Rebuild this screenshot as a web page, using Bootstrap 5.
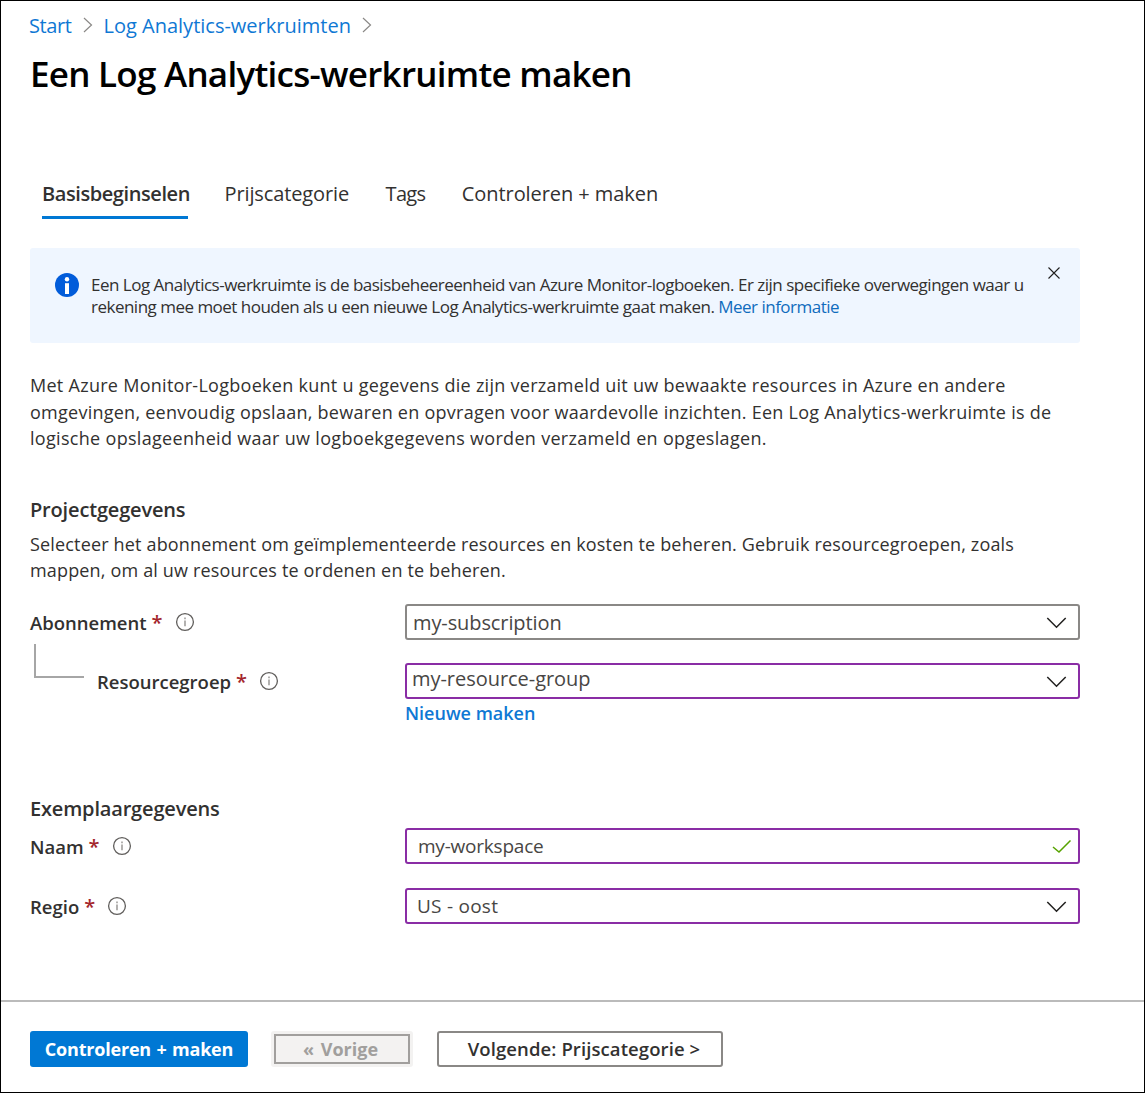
<!DOCTYPE html>
<html lang="nl">
<head>
<meta charset="utf-8">
<meta name="viewport" content="width=device-width, initial-scale=1">
<title>Een Log Analytics-werkruimte maken</title>
<link href="https://cdn.jsdelivr.net/npm/bootstrap@5.3.0/dist/css/bootstrap.min.css" rel="stylesheet">
<style>
body{font-family:"Open Sans","Noto Sans",sans-serif;color:#323130;background:#fff}
svg{flex-shrink:0}
.page-frame{width:1145px;height:1093px;border:1px solid #000;padding-top:11px;overflow:hidden;white-space:nowrap}
.inner{padding-left:29px;width:1079px}
a{color:#0f78d4;text-decoration:none}
.crumbs{font-size:20px;line-height:28px;height:28px;gap:11px;margin-left:-1px}
.c1{letter-spacing:-.4px}
.crumbs svg{margin-top:-2px}
.page-title{font-size:35px;line-height:48px;font-weight:600;letter-spacing:-.74px;color:#000;margin:10px 0 0}
.tabs{margin:82px 0 0 12px;gap:36.5px}
.tabs .nav-link{padding:0 0 8px;font-size:20px;line-height:28px;color:#323130;border-bottom:3px solid transparent}
.tabs .nav-link.active{font-weight:600;border-color:#0078d4}
.tabs .t1{width:146px;letter-spacing:-.42px}
.t2{letter-spacing:-.12px}
.t3{letter-spacing:-.7px}
.t4{letter-spacing:-.07px}
.notice{margin-top:29px;height:95px;background:#eff6ff;border-radius:3px;padding:25px 20px 0 25px;font-size:17px;line-height:22px}
.notice-text{margin:1px 0 0 12px}
.n1{letter-spacing:-.496px}
.n2{letter-spacing:-.51px}
.n2 a{color:#0f6cbd}
.notice .x-ico{margin:-6px 0 0 auto}
.para{font-size:18px;line-height:26.5px;margin:0}
.p1{letter-spacing:.28px;margin-top:29px}
.p1b{letter-spacing:.255px}
.p1c{letter-spacing:.31px}
.p2{letter-spacing:.165px;margin-top:7px}
.sect{font-size:20px;line-height:28px;font-weight:600;letter-spacing:-.17px;margin:0}
.frow{height:36px}
.lbl{width:375px;font-size:18.5px;font-weight:600;line-height:36px;padding-top:2px}
.req{color:#a4262c;margin-left:5px;font-size:20px}
.lbl svg{margin-left:12px;margin-top:-1px}
.box{flex:1;height:36px;border:2px solid #8a8886;border-radius:3px;padding:0 11px 0 6px;font-size:20px;line-height:32px;color:#484644;letter-spacing:-.1px}
.box.edited{border-color:#8a2da5}
.box svg{margin-top:2px}
.v-sub{margin-top:2px}
.v-group{margin:-3px 0 0 -1px;letter-spacing:-.04px}
.v-name{margin-left:5px;font-size:19px;letter-spacing:-.22px}
.v-region{margin-left:4px;font-size:19px;letter-spacing:.25px}
.elbow{width:50px;height:34px;border:solid #a6a6a6;border-width:0 0 2px 2px;margin:-21px 13px 0 4px}
.newlink{margin-left:375px;padding-top:2px;font-size:18px;line-height:24px;font-weight:600}
.foot{border-top:2px solid #bbb;margin-top:76px;padding:29px 0 0 29px}
.foot .btn{height:36px;border-radius:3px;font-size:18px;line-height:36px;font-weight:700;padding:0}
.foot .b-main{width:218px;background:#0078d4;color:#fff;border:0;letter-spacing:-.2px;word-spacing:1px}
.b-prev,.b-prev:disabled{width:142px;margin-left:23px;background:#f3f2f1;border:3px solid #f3f2f1;opacity:1}
.b-prev span{display:block;height:30px;line-height:27px;border:2px solid #a19f9d;color:#a19f9d;word-spacing:2px;padding-right:3px}
.foot .b-next{width:286px;margin-left:24px;border:2px solid #8a8886;color:#323130;font-weight:600;font-size:18.5px;letter-spacing:.1px;line-height:32px;padding-left:8px}
</style>
</head>
<body>
<svg width="0" height="0" class="d-none">
<symbol id="info" viewBox="0 0 20 20"><circle cx="10" cy="10" r="8.4" fill="none" stroke="#605e5c" stroke-width="1.3"/><path d="M10 8.6v5.6M10 5.6v1.6" stroke="#8a8886" stroke-width="1.3"/></symbol>
<symbol id="chev" viewBox="0 0 22 14"><path d="M2.300 2 11.500 11.300 20.700 2" fill="none" stroke="#201f1e" stroke-width="1.5"/></symbol>
<symbol id="sep" viewBox="0 0 10 16"><path d="M1 1l7.500 7L1 15" fill="none" stroke="#8a8886" stroke-width="1.2"/></symbol>
</svg>
<div class="page-frame">
<div class="inner">
<nav class="crumbs d-flex align-items-center"><a href="#" class="c1">Start</a><svg width="10" height="16"><use href="#sep"/></svg><a href="#" class="c2">Log Analytics-werkruimten</a><svg width="10" height="16"><use href="#sep"/></svg></nav>
<h1 class="page-title">Een Log Analytics-werkruimte maken</h1>
<ul class="nav tabs flex-nowrap">
<li class="nav-item"><a class="nav-link active t1" href="#">Basisbeginselen</a></li>
<li class="nav-item"><a class="nav-link t2" href="#">Prijscategorie</a></li>
<li class="nav-item"><a class="nav-link t3" href="#">Tags</a></li>
<li class="nav-item"><a class="nav-link t4" href="#">Controleren + maken</a></li>
</ul>
<div class="notice d-flex align-items-start">
<svg width="24" height="24" viewBox="0 0 24 24"><circle cx="12" cy="12" r="12" fill="#015cda"/><circle cx="12" cy="6.200" r="2.200" fill="#fff"/><path d="M10 10.200h4V21h-4z" fill="#fff"/></svg>
<div class="notice-text"><span class="n1">Een Log Analytics-werkruimte is de basisbeheereenheid van Azure Monitor-logboeken. Er zijn specifieke overwegingen waar u</span><br><span class="n2">rekening mee moet houden als u een nieuwe Log Analytics-werkruimte gaat maken. <a href="#">Meer informatie</a></span></div>
<svg class="x-ico" width="12" height="12"><path d="M.5.5l11 11M11.500.5l-11 11" stroke="#201f1e" stroke-width="1.1"/></svg>
</div>
<p class="para p1">Met Azure Monitor-Logboeken kunt u gegevens die zijn verzameld uit uw bewaakte resources in Azure en andere<br><span class="p1b">omgevingen, eenvoudig opslaan, bewaren en opvragen voor waardevolle inzichten. Een Log Analytics-werkruimte is de</span><br><span class="p1c">logische opslageenheid waar uw logboekgegevens worden verzameld en opgeslagen.</span></p>
<h2 class="sect" style="margin-top:44px">Projectgegevens</h2>
<p class="para p2">Selecteer het abonnement om geïmplementeerde resources en kosten te beheren. Gebruik resourcegroepen, zoals<br>mappen, om al uw resources te ordenen en te beheren.</p>
<div class="frow d-flex" style="margin-top:20px"><div class="lbl d-flex align-items-center"><span>Abonnement</span><span class="req">*</span><svg width="20" height="20"><use href="#info"/></svg></div><div class="box d-flex align-items-center"><span class="v-sub">my-subscription</span><svg class="ms-auto" width="22" height="14"><use href="#chev"/></svg></div></div>
<div class="frow d-flex" style="margin-top:23px"><div class="lbl d-flex align-items-center"><span class="elbow align-self-start"></span><span>Resourcegroep</span><span class="req">*</span><svg width="20" height="20"><use href="#info"/></svg></div><div class="box edited d-flex align-items-center"><span class="v-group">my-resource-group</span><svg class="ms-auto" width="22" height="14"><use href="#chev"/></svg></div></div>
<div class="newlink"><a href="#">Nieuwe maken</a></div>
<h2 class="sect" style="margin-top:70px">Exemplaargegevens</h2>
<div class="frow d-flex" style="margin-top:5px"><div class="lbl d-flex align-items-center"><span>Naam</span><span class="req">*</span><svg width="20" height="20"><use href="#info"/></svg></div><div class="box edited d-flex align-items-center"><span class="v-name">my-workspace</span><svg class="ms-auto" style="margin-right:-5px" width="20" height="14"><path d="M1 7l6 5L18.500.5" fill="none" stroke="#57a300" stroke-width="1.500"/></svg></div></div>
<div class="frow d-flex" style="margin-top:24px"><div class="lbl d-flex align-items-center"><span>Regio</span><span class="req">*</span><svg width="20" height="20"><use href="#info"/></svg></div><div class="box edited d-flex align-items-center"><span class="v-region">US - oost</span><svg class="ms-auto" width="22" height="14"><use href="#chev"/></svg></div></div>
</div>
<div class="foot d-flex"><button class="btn b-main">Controleren + maken</button><button class="btn b-prev" disabled><span>« Vorige</span></button><button class="btn b-next">Volgende: Prijscategorie &gt;</button></div>
</div>
<script src="https://cdn.jsdelivr.net/npm/bootstrap@5.3.0/dist/js/bootstrap.bundle.min.js"></script>
</body>
</html>
